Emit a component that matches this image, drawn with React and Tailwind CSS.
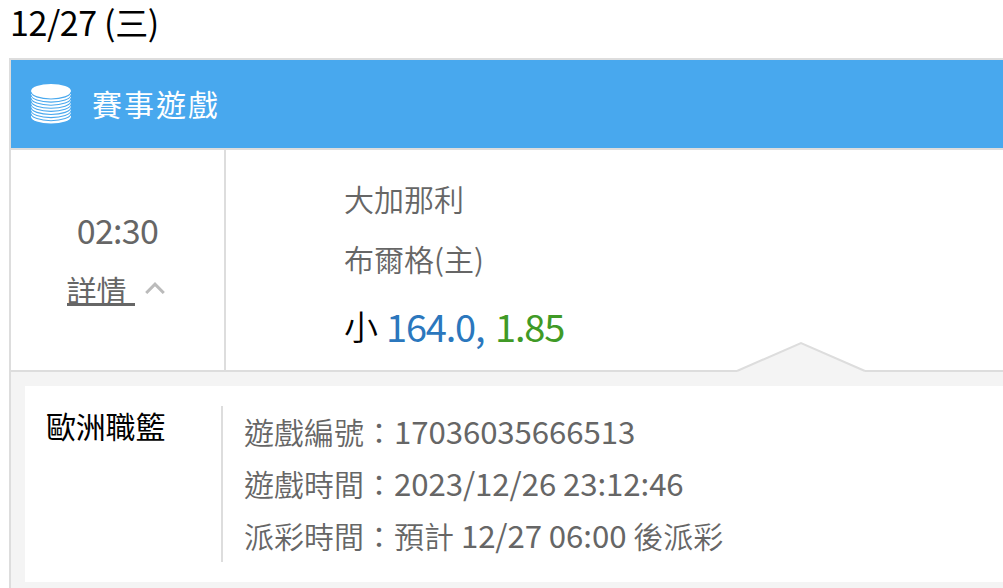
const details = [
  { label: '遊戲編號：', parts: [{ num: '17036035666513' }] },
  { label: '遊戲時間：', parts: [{ num: '2023/12/26 23:12:46' }] },
  { label: '派彩時間：', parts: [{ text: '預計' }, { num: ' 12/27 06:00 ' }, { text: '後派彩' }] },
];

// gaps between the stacked coins
const coinLines = [7.8, 10.9, 14, 17.1, 20.2, 23.3, 26.4, 29.5];

function CoinsIcon() {
  return (
    <svg width="40" height="40" viewBox="0 0 40 40" className="shrink-0">
      <path d="M0 7.2A20 7.2 0 0 1 40 7.2V32.4A20 7.2 0 0 1 0 32.4z" fill="#fff" />
      {coinLines.map((y) => (
        <path key={y} d={`M0 ${y}A20 7.2 0 0 0 40 ${y}`} fill="none" stroke="#48a8ee" strokeWidth="1.1" />
      ))}
    </svg>
  );
}

export default function App() {
  return (
    <div className="h-[588px] w-[1003px] overflow-hidden bg-white font-['Noto_Sans_CJK_TC',sans-serif] text-[#666]">
      <h1 className="h-[58px] pl-[10px] text-[34px] leading-[44px] tracking-[-0.4px] whitespace-pre text-black">
        12/27 (<span className="text-[33px]">三</span>)
      </h1>

      <div className="ml-[9px] h-[540px] border-t-2 border-l-2 border-[#ddd]">
        <div className="flex h-[90px] items-center gap-[21px] border-b-2 border-[#ddd] bg-[#48a8ee] pl-5">
          <CoinsIcon />
          <h2 className="pb-[2px] text-[30px] leading-[40px] tracking-[2px] text-white">賽事遊戲</h2>
        </div>

        <div className="relative flex h-[222px] border-b-2 border-[#ddd]">
          <div className="flex w-[215px] flex-col items-center border-r-2 border-[#ddd] pt-[50px]">
            <div className="text-[34px] leading-[60px] tracking-[-0.7px]">02:30</div>
            <div className="flex w-[102px] items-center gap-[10px] pt-px">
              <div className="h-[45px] w-[68px] border-b-[3px] border-[#666] text-[30px] leading-[56px]">
                詳情
              </div>
              <svg width="20" height="12" viewBox="0 0 20 12" fill="none" className="mt-[8px]">
                <path d="M1.2 11 10 2.2 18.8 11" stroke="#bbb" strokeWidth="3" />
              </svg>
            </div>
          </div>

          <div className="pt-[18px] pl-[118px] text-[30px] font-[350]">
            <div className="leading-[60px]">大加那利</div>
            <div className="leading-[60px]">布爾格(主)</div>
            <div className="flex items-center text-[38px] leading-[75px] font-normal tracking-[-1.2px]">
              <span className="w-[42px] text-[34px] font-[350] text-black">小</span>
              <span className="w-[109px] text-[#2b77bd]">164.0,</span>
              <span className="text-[#409a26]">1.85</span>
            </div>
          </div>

          <svg
            className="absolute top-[191px] left-[725px]"
            width="130"
            height="31"
            viewBox="0 0 130 31"
          >
            <path d="M1 30 65 2 129 30v1H1z" fill="#f4f4f4" />
            <path d="M1 30 65 2 129 30" fill="none" stroke="#ddd" strokeWidth="2" />
          </svg>
        </div>

        <div className="h-[224px] bg-[#f4f4f4] pt-[14px] pl-[14px]">
          <div className="flex h-[196px] bg-white py-5 pl-[21px]">
            <h3 className="w-[175px] text-[30px] leading-[38px] tracking-[-0.2px] text-black">歐洲職籃</h3>
            <ul className="border-l-2 border-[#ddd] pl-[21px]">
              {details.map((row) => (
                <li
                  key={row.label}
                  className="flex h-[52px] items-center pb-[2px] text-[30px] leading-[50px] whitespace-pre"
                >
                  <span className="font-[350]">{row.label}</span>
                  {row.parts.map((part) =>
                    part.num ? (
                      <span key={part.num} className="text-[31.2px] tracking-[-0.08px]">{part.num}</span>
                    ) : (
                      <span key={part.text} className="font-[350]">{part.text}</span>
                    )
                  )}
                </li>
              ))}
            </ul>
          </div>
        </div>
      </div>
    </div>
  );
}
